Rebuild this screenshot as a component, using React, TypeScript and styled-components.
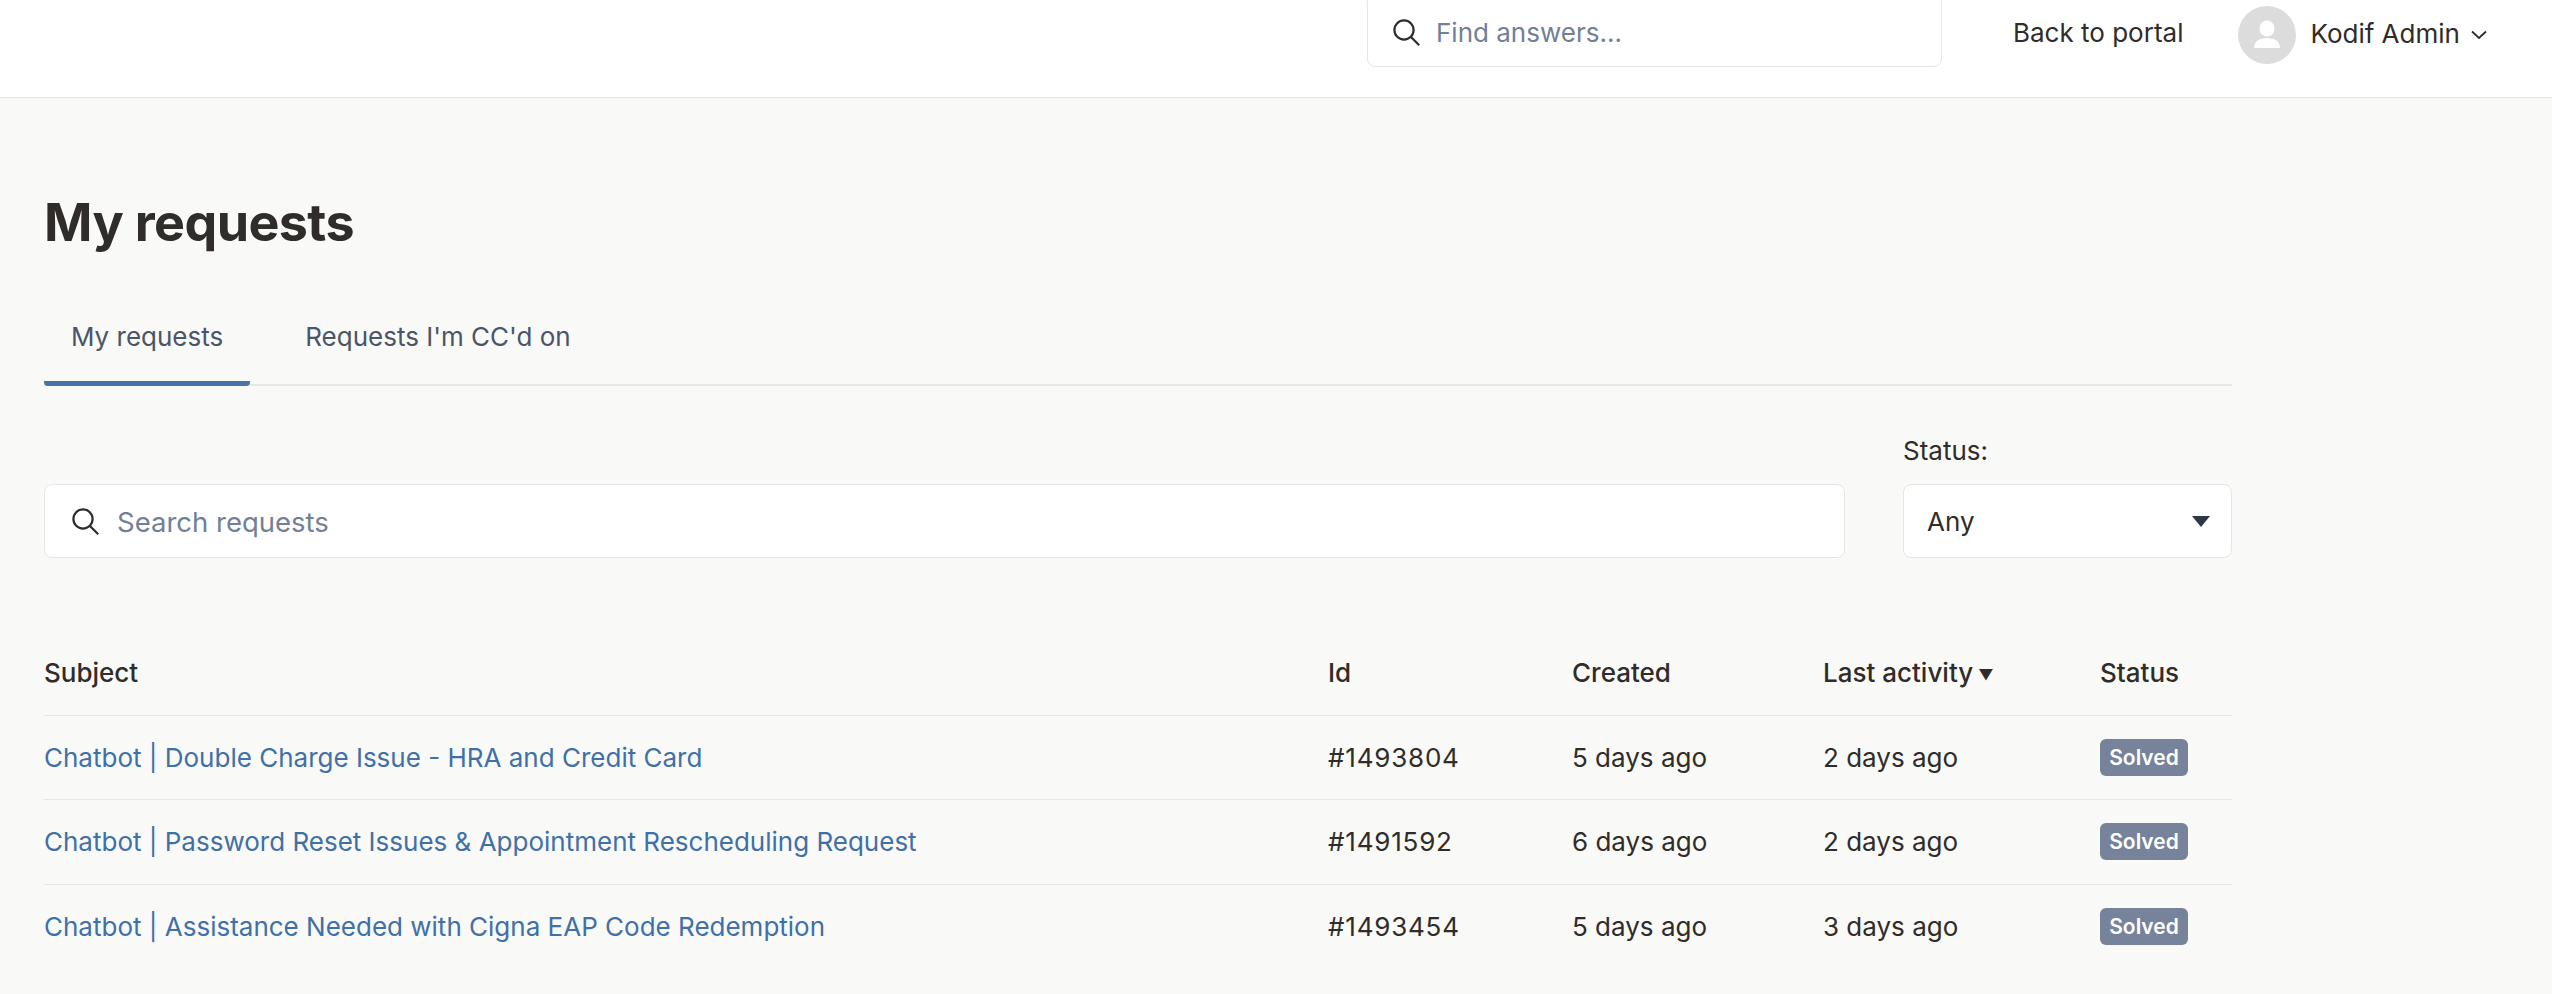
import React from 'react';
import styled, { createGlobalStyle } from 'styled-components';

const GlobalStyle = createGlobalStyle`
  html, body {
    margin: 0;
    padding: 0;
    height: 100%;
    overflow: hidden;
    background: #f9f9f7;
  }
  body {
    color: #2f2c2a;
    font-family: Inter, 'Liberation Sans', sans-serif;
    font-size: 26px;
  }
  * {
    box-sizing: border-box;
  }
`;

const Header = styled.header`
  height: 98px;
  background: #fff;
  border-bottom: 1px solid #e6e6e2;
  display: flex;
  align-items: flex-start;
  overflow: hidden;
`;

const HeaderSearch = styled.div`
  width: 575px;
  height: 73px;
  margin: -6px 0 0 1367px;
  padding: 3px 24px 0 25px;
  display: flex;
  align-items: center;
  gap: 16px;
  background: #fff;
  border: 1.5px solid #e6e6e2;
  border-radius: 8px;
`;

const Placeholder = styled.span<{ $large?: boolean }>`
  color: #718096;
  font-size: ${(p) => (p.$large ? '27.5px' : '26px')};
`;

const BackLink = styled.a`
  margin: 17px 0 0 71px;
  line-height: 32px;
  white-space: nowrap;
`;

const UserMenu = styled.div`
  margin: 6px 0 0 55px;
  height: 58px;
  display: flex;
  align-items: center;
`;

const Avatar = styled.svg`
  width: 58px;
  height: 58px;
  display: block;
  margin-right: 14px;
`;

const UserName = styled.span`
  white-space: nowrap;
  margin: 0 11px 3px 0;
`;

const Main = styled.main`
  width: 2188px;
  margin-left: 44px;
`;

const Title = styled.h1`
  margin: 0;
  padding-top: 93px;
  font-size: 52px;
  line-height: 64px;
  font-weight: 700;
  letter-spacing: -0.6px;
  color: #2f2c2a;
`;

const Tabs = styled.nav`
  margin-top: 56px;
  height: 75px;
  display: flex;
  gap: 28px;
  border-bottom: 2px solid #e6e6e2;
`;

const Tab = styled.a<{ $active?: boolean }>`
  height: 75px;
  padding: 0 27px;
  line-height: 52px;
  color: #4a5568;
  white-space: nowrap;
  border-bottom: ${(p) => (p.$active ? '5px solid #4474a8' : '0')};
  border-radius: 0 0 4px 4px;
`;

const Filters = styled.section`
  margin-top: 49px;
  display: flex;
  align-items: flex-end;
  gap: 58px;
`;

const RequestSearch = styled.div`
  flex: 1;
  height: 74px;
  padding: 1px 27px 0;
  display: flex;
  align-items: center;
  gap: 18px;
  background: #fff;
  border: 1.5px solid #e6e6e2;
  border-radius: 8px;
`;

const StatusFilter = styled.div`
  width: 329px;
`;

const FilterLabel = styled.label`
  display: block;
  line-height: 32px;
  margin-bottom: 17px;
`;

const Select = styled.div`
  height: 74px;
  padding: 1px 21px 0 23px;
  display: flex;
  align-items: center;
  justify-content: space-between;
  background: #fff;
  border: 1.5px solid #e6e6e2;
  border-radius: 8px;
`;

const Caret = styled.span`
  width: 0;
  height: 0;
  border-left: 9px solid transparent;
  border-right: 9px solid transparent;
  border-top: 11px solid #2d3748;
`;

const Table = styled.div`
  margin-top: 71.5px;
`;

const Row = styled.div<{ $head?: boolean }>`
  display: grid;
  grid-template-columns: 1284px 244px 251px 277px 1fr;
  align-items: center;
  height: ${(p) => (p.$head ? '85px' : '84.5px')};
  font-weight: ${(p) => (p.$head ? 500 : 400)};
  & + & {
    border-top: 1.5px solid #e6e6e2;
  }
`;

const IdCell = styled.div`
  letter-spacing: 0.8px;
`;

const SortMark = styled.span`
  margin-left: 5px;
  font-size: 15px;
  vertical-align: 2px;
`;

const SubjectLink = styled.a`
  color: #3f70a8;
`;

const Badge = styled.span`
  display: inline-block;
  width: 88px;
  height: 37px;
  line-height: 37px;
  text-align: center;
  background: #76839a;
  color: #fff;
  font-size: 21px;
  font-weight: 600;
  border-radius: 6px;
`;

const SearchIcon = () => (
  <svg width="27" height="27" viewBox="0 0 27 27" fill="none" stroke="#2f2c2a" strokeWidth="2.2">
    <circle cx="11" cy="11" r="9.6" />
    <path d="M18 18l8.2 8.2" />
  </svg>
);

const Chevron = () => (
  <svg width="16" height="10" viewBox="0 0 16 10" fill="none" stroke="#2f2c2a" strokeWidth="1.8">
    <path d="M1 1.5L8 8l7-6.5" />
  </svg>
);

const requests = [
  {
    subject: 'Chatbot | Double Charge Issue - HRA and Credit Card',
    id: '#1493804',
    created: '5 days ago',
    activity: '2 days ago',
  },
  {
    subject: 'Chatbot | Password Reset Issues & Appointment Rescheduling Request',
    id: '#1491592',
    created: '6 days ago',
    activity: '2 days ago',
  },
  {
    subject: 'Chatbot | Assistance Needed with Cigna EAP Code Redemption',
    id: '#1493454',
    created: '5 days ago',
    activity: '3 days ago',
  },
];

const App = () => {
  return (
    <>
      <GlobalStyle />
      <Header>
        <HeaderSearch>
          <SearchIcon />
          <Placeholder>Find answers...</Placeholder>
        </HeaderSearch>
        <BackLink>Back to portal</BackLink>
        <UserMenu>
          <Avatar viewBox="0 0 58 58">
            <circle cx="29" cy="29" r="29" fill="#dcdcdc" />
            <ellipse cx="29" cy="22.5" rx="7.5" ry="8" fill="#fff" />
            <path d="M16 42c0-6.500 5-10 13-10s13 3.500 13 10z" fill="#fff" />
          </Avatar>
          <UserName>Kodif Admin</UserName>
          <Chevron />
        </UserMenu>
      </Header>
      <Main>
        <Title>My requests</Title>
        <Tabs>
          <Tab $active>My requests</Tab>
          <Tab>Requests I'm CC'd on</Tab>
        </Tabs>
        <Filters>
          <RequestSearch>
            <SearchIcon />
            <Placeholder $large>Search requests</Placeholder>
          </RequestSearch>
          <StatusFilter>
            <FilterLabel>Status:</FilterLabel>
            <Select>
              Any
              <Caret />
            </Select>
          </StatusFilter>
        </Filters>
        <Table>
          <Row $head>
            <div>Subject</div>
            <div>Id</div>
            <div>Created</div>
            <div>
              Last activity<SortMark>▼</SortMark>
            </div>
            <div>Status</div>
          </Row>
          {requests.map((r) => (
            <Row key={r.id}>
              <SubjectLink>{r.subject}</SubjectLink>
              <IdCell>{r.id}</IdCell>
              <div>{r.created}</div>
              <div>{r.activity}</div>
              <div>
                <Badge>Solved</Badge>
              </div>
            </Row>
          ))}
        </Table>
      </Main>
    </>
  );
};

export default App;
